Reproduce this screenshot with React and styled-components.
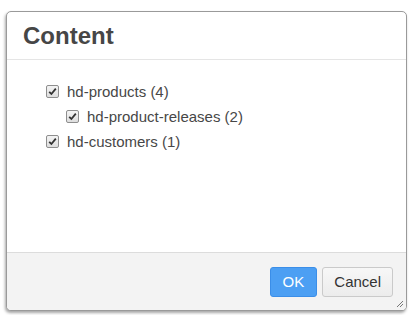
import React, { useState } from 'react';
import styled, { createGlobalStyle } from 'styled-components';

const GlobalStyle = createGlobalStyle`
  html, body {
    margin: 0;
    padding: 0;
    background: #ffffff;
    font-family: "Liberation Sans", Arial, sans-serif;
  }
`;

const Page = styled.div`
  width: 416px;
  height: 315px;
  box-sizing: border-box;
  padding: 11px 9px 4px 6px;
`;

const Dialog = styled.div`
  position: relative;
  height: 100%;
  box-sizing: border-box;
  display: flex;
  flex-direction: column;
  border: 1px solid #9a9a9a;
  border-radius: 5px;
  background: #fff;
  box-shadow: -1px 2px 3px rgba(0, 0, 0, 0.35);
  overflow: hidden;
`;

const Header = styled.div`
  height: 48px;
  box-sizing: border-box;
  display: flex;
  align-items: center;
  padding: 0 16px;
  border-bottom: 1px solid #e5e5e5;
`;

const Title = styled.h1`
  margin: 0;
  font-size: 24px;
  font-weight: bold;
  color: #464646;
`;

const Body = styled.div`
  flex: 1;
  padding: 19px 39px;
`;

const Row = styled.label`
  display: flex;
  align-items: center;
  height: 25px;
  padding-left: ${p => p.level * 20}px;
  font-size: 15px;
  color: #474747;
  cursor: pointer;
`;

const Box = styled.span`
  width: 11px;
  height: 11px;
  margin-right: 8px;
  border: 1px solid #8e8e8e;
  border-radius: 2px;
  background: linear-gradient(#f4f4f4, #dedede);
  display: flex;
  align-items: center;
  justify-content: center;
`;

const Footer = styled.div`
  height: 58px;
  box-sizing: border-box;
  display: flex;
  justify-content: flex-end;
  align-items: center;
  gap: 5px;
  padding: 0 13px 0 0;
  background: #f3f3f3;
  border-top: 1px solid #dcdcdc;
`;

const Button = styled.button`
  height: 30px;
  padding: 0 ${p => (p.primary ? 12 : 11)}px;
  font-family: "Liberation Sans", Arial, sans-serif;
  font-size: 15px;
  border-radius: 3px;
  border: 1px solid ${p => (p.primary ? '#3b8ee8' : '#cacaca')};
  background: ${p => (p.primary ? '#4c9ff3' : 'linear-gradient(#f7f7f7, #ececec)')};
  color: ${p => (p.primary ? '#ffffff' : '#333333')};
  cursor: pointer;
`;

const Grip = styled.svg`
  position: absolute;
  right: 2px;
  bottom: 2px;
`;

const items = [
  { name: 'hd-products (4)', level: 0 },
  { name: 'hd-product-releases (2)', level: 1 },
  { name: 'hd-customers (1)', level: 0 },
];

const Check = ({ on }) => (
  <Box>
    {on && (
      <svg width="9" height="9" viewBox="0 0 9 9">
        <path d="M1.2 4.8 L3.4 7 L7.8 1.6" fill="none" stroke="#333" strokeWidth="1.8" />
      </svg>
    )}
  </Box>
);

const App = () => {
  const [checked, setChecked] = useState(items.map(() => true));

  const toggle = index => {
    setChecked(checked.map((c, i) => (i === index ? !c : c)));
  };

  return (
    <>
      <GlobalStyle />
      <Page>
        <Dialog>
          <Header>
            <Title>Content</Title>
          </Header>
          <Body>
            {items.map((item, index) => (
              <Row key={item.name} level={item.level} onClick={() => toggle(index)}>
                <Check on={checked[index]} />
                {item.name}
              </Row>
            ))}
          </Body>
          <Footer>
            <Button primary>OK</Button>
            <Button>Cancel</Button>
          </Footer>
          <Grip width="8" height="8" viewBox="0 0 8 8">
            <path d="M1 7 L7 1 M4 7 L7 4" stroke="#777" strokeWidth="1" />
          </Grip>
        </Dialog>
      </Page>
    </>
  );
};

export default App;
